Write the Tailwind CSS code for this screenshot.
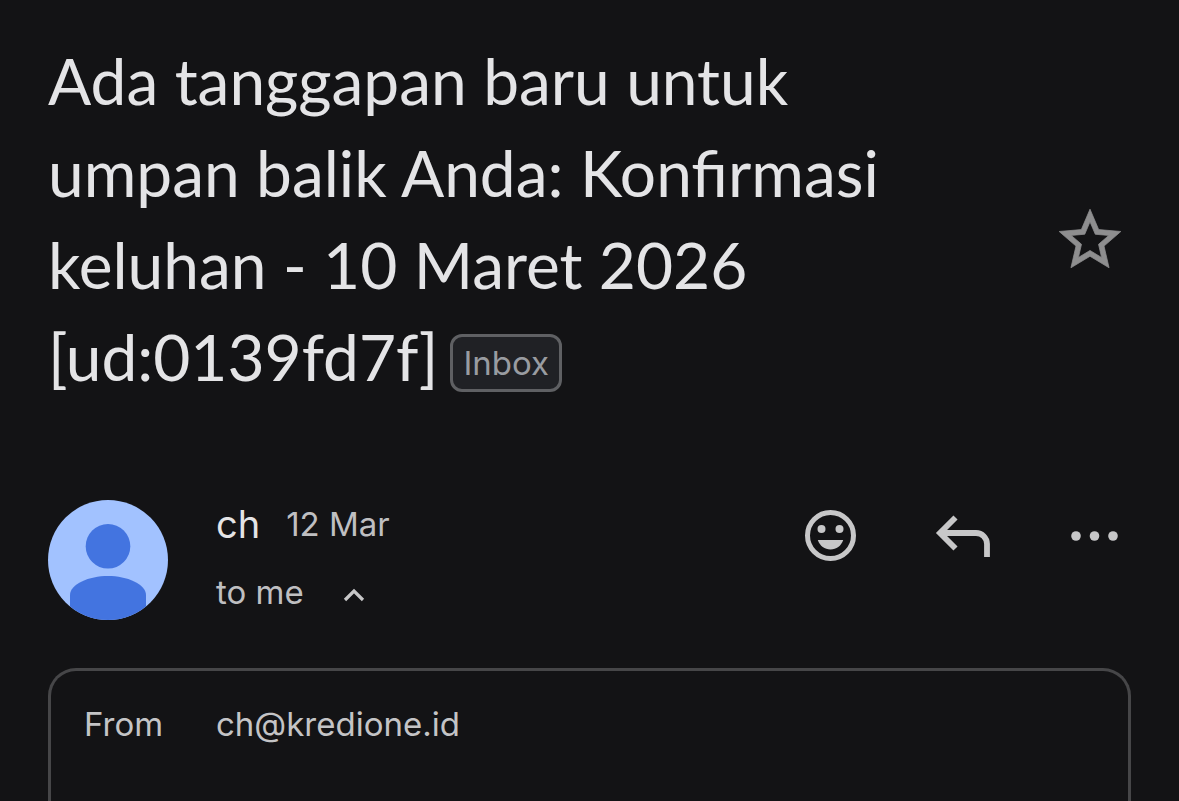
<!DOCTYPE html>
<html lang="id">
<head>
  <meta charset="UTF-8" />
  <meta name="viewport" content="width=device-width, initial-scale=1" />
  <title>Ada tanggapan baru untuk umpan balik Anda</title>
  <script src="https://cdn.jsdelivr.net/npm/@tailwindcss/browser@4"></script>
</head>
<body class="bg-[#131315] text-[#e4e4e6] font-[Inter,sans-serif]">
  <main class="h-screen flex flex-col px-12 pt-[35px] overflow-hidden">

    <!-- Subject -->
    <header class="flex items-center justify-between">
      <h1 class="max-w-[880px] pb-10 font-[Lato,sans-serif] text-[64px] leading-[92px]">
        <span class="block">Ada tanggapan baru untuk umpan balik Anda: Konfirmasi keluhan - 10 Maret 2026</span>
        <span class="flex items-center gap-3">
          <span>[ud:0139fd7f]</span>
          <span class="mt-3 px-2.5 rounded-xl border-3 border-[#5f6063] bg-[#202125] font-[Inter,sans-serif] text-[33px] leading-[52px] text-[#999ca1]">Inbox</span>
        </span>
      </h1>
      <button type="button" aria-label="Star" class="shrink-0 mr-1 pt-0.5">
        <svg class="size-[74px]" viewBox="0 0 24 24" fill="#8e8e8f" stroke="#8e8e8f" stroke-width=".25"><path d="M22 9.24l-7.19-.62L12 2 9.19 8.63 2 9.24l5.46 4.73L5.82 21 12 17.27 18.18 21l-1.63-7.03L22 9.24zM12 15.4l-3.76 2.27 1-4.28-3.32-2.88 4.38-.38L12 6.1l1.71 4.04 4.38.38-3.32 2.88 1 4.28L12 15.4z" /></svg>
      </button>
    </header>

    <!-- Sender -->
    <section class="flex items-start mt-[57px]">
      <svg class="size-[120px] shrink-0 rounded-full" viewBox="0 0 120 120" aria-hidden="true">
        <rect width="120" height="120" fill="#a2c2ff" />
        <circle cx="60" cy="46.3" r="22.3" fill="#4374e0" />
        <path d="M22 120V95C22 84 41 76 60 76s38 8 38 19v25z" fill="#4374e0" />
      </svg>
      <div class="ml-12 grow">
        <div class="flex items-center gap-[26px] leading-12">
          <span class="text-[38px]">ch</span>
          <span class="text-[33px] text-[#bfbfc1]">12 Mar</span>
        </div>
        <button type="button" class="flex items-center gap-[38px] mt-5 text-[33px] leading-12 text-[#bfbfc1]">
          to me
          <svg class="w-6 h-4 mt-1.5" viewBox="0 0 24 16" fill="none" stroke="#c7c7c8" stroke-width="3.2"><path d="M3 13l9-9 9 9" /></svg>
        </button>
      </div>
      <div class="flex gap-[72px] mt-1 mr-3">
        <button type="button" aria-label="Add reaction">
          <svg class="size-16" viewBox="0 0 64 64" fill="#c7c7c8">
            <circle cx="31.5" cy="31.5" r="23" fill="none" stroke="#c7c7c8" stroke-width="5" />
            <circle cx="22.5" cy="25" r="4" />
            <circle cx="40.5" cy="25" r="4" />
            <path d="M18.8 36h25.4C42 42 37.5 45.5 31.5 45.5S21 42 18.8 36z" />
          </svg>
        </button>
        <button type="button" aria-label="Reply">
          <svg class="size-16" viewBox="0 0 64 64" fill="none" stroke="#c7c7c8" stroke-width="5.8"><path d="M20.5 13.5L5 29l15.5 15.5M5 29h36a11 11 0 0 1 11 11v13" /></svg>
        </button>
        <button type="button" aria-label="More">
          <svg class="w-12 h-16" viewBox="0 0 48 64" fill="#c7c7c8"><circle cx="5" cy="32" r="4.8" /><circle cx="23.5" cy="32" r="4.8" /><circle cx="42" cy="32" r="4.8" /></svg>
        </button>
      </div>
    </section>

    <!-- Details -->
    <dl class="grow flex items-start mt-12 px-[33px] pt-[29px] border-3 border-b-0 border-[#464648] rounded-t-[28px] text-[33px] leading-12 text-[#c4c4c6]">
      <dt class="w-[132px] shrink-0">From</dt>
      <dd>ch@kredione.id</dd>
    </dl>
  </main>
</body>
</html>
